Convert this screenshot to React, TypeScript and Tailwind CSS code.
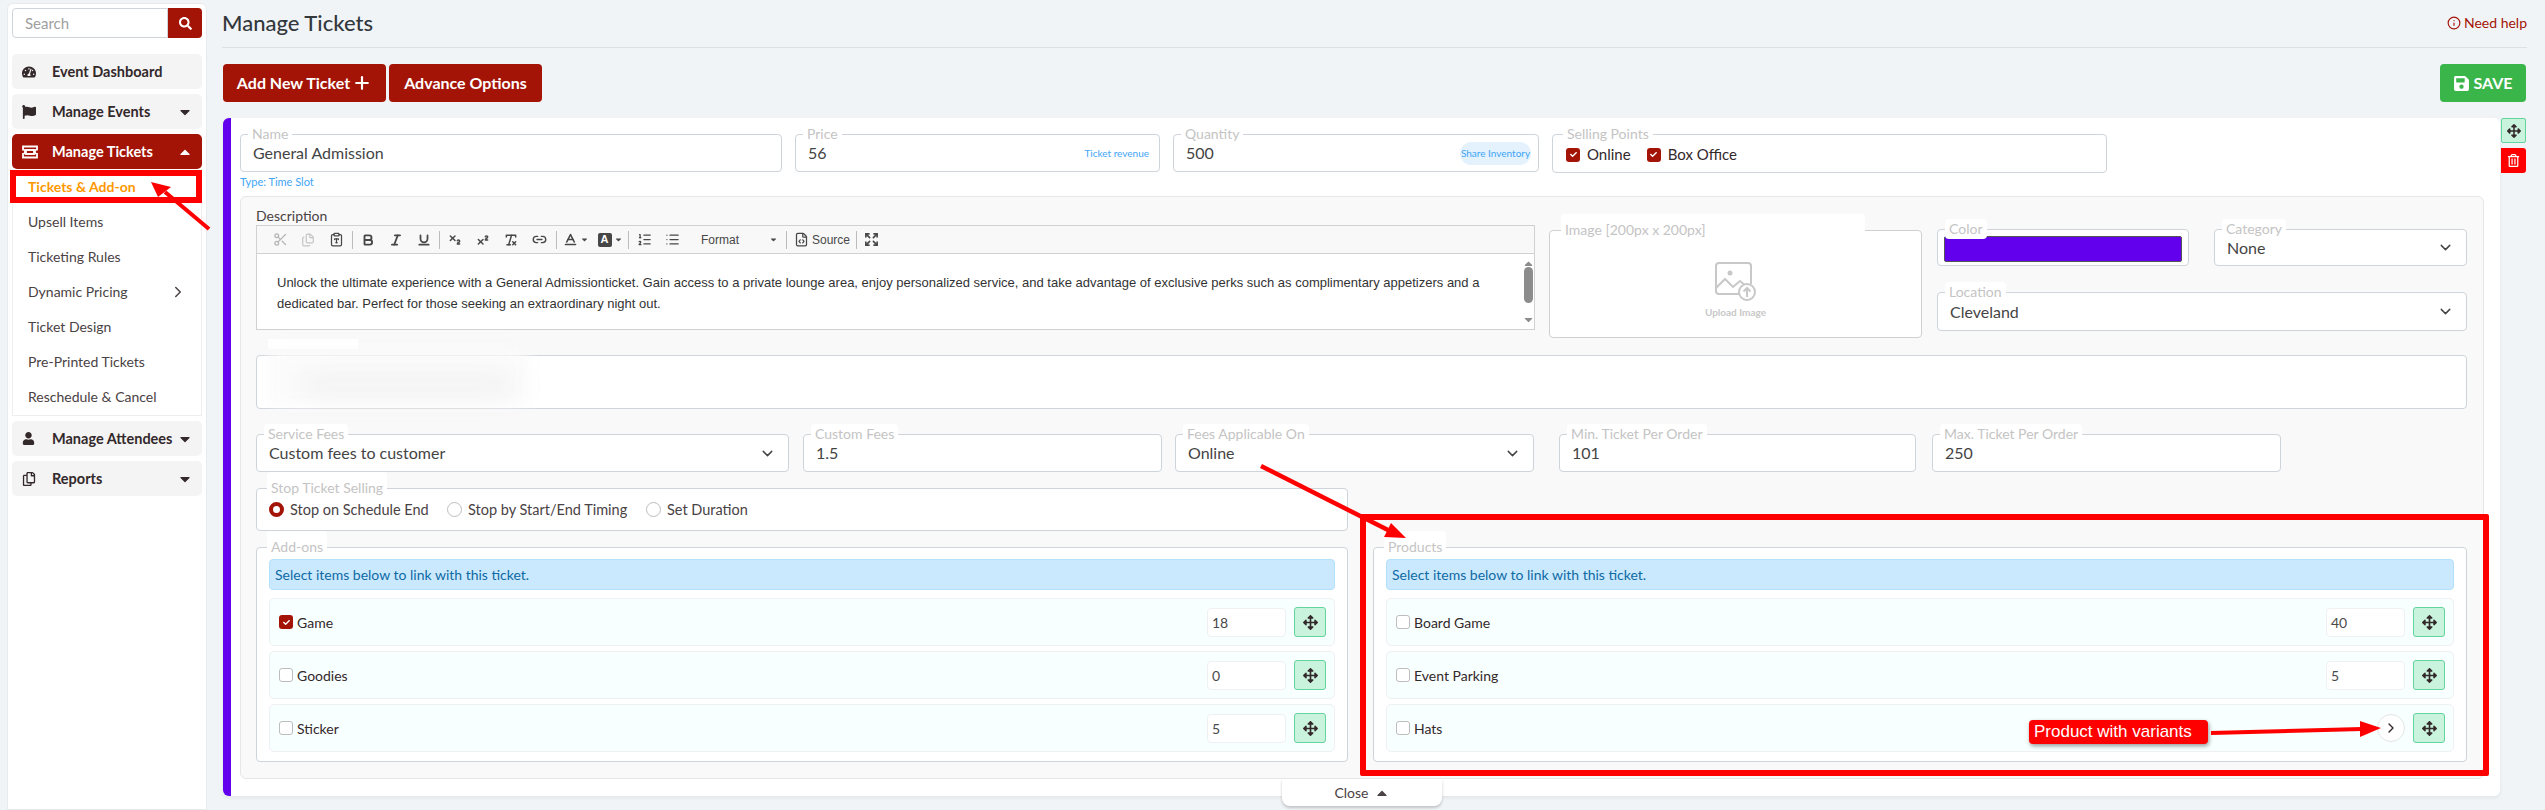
import type { ReactNode } from "react";
import {
  FaArrowsAlt,
  FaCaretDown,
  FaCaretUp,
  FaCheck,
  FaFlag,
  FaRegCopy,
  FaRegTrashAlt,
  FaSave,
  FaSearch,
  FaTachometerAlt,
  FaUser,
} from "react-icons/fa";
import {
  Baseline,
  Bold,
  ChevronDown,
  ChevronRight,
  ClipboardType,
  Expand,
  FileCode,
  Files,
  Info,
  Italic,
  Link2,
  List,
  ListOrdered,
  Plus,
  RemoveFormatting,
  Scissors,
  Subscript,
  Superscript,
  Underline,
} from "lucide-react";

function TicketIcon() {
  return (
    <svg width="16" height="14" viewBox="0 0 16 14" fill="none" stroke="currentColor" strokeWidth="1.8">
      <path d="M1 1.5h14v3.2a2 2 0 0 0 0 4.2v3.6H1V8.9a2 2 0 0 0 0-4.2z" />
      <path d="M4 5h8v4H4z" />
    </svg>
  );
}

function UploadImageIcon() {
  return (
    <svg width="46" height="40" viewBox="0 0 46 40" fill="none" stroke="#c8c8c8" strokeWidth="2">
      <path d="M26 32H6a3 3 0 0 1-3-3V4a3 3 0 0 1 3-3h29a3 3 0 0 1 3 3v18" />
      <path d="M3 26l9-9 8 8 7-6 6 5" />
      <circle cx="17" cy="11" r="2.5" fill="#c8c8c8" stroke="none" />
      <circle cx="34" cy="30" r="8" fill="#fff" />
      <path d="M34 35v-9M30.5 29.5l3.5-3.5 3.5 3.5" />
    </svg>
  );
}

function Field({
  label,
  className,
  labelClass = "",
  children,
}: {
  label: string;
  className: string;
  labelClass?: string;
  children?: ReactNode;
}) {
  return (
    <div className={`relative rounded-[4px] border border-[#ced4da] bg-white ${className}`}>
      <span
        className={`absolute left-[7px] -top-[11px] rounded-[4px] bg-white px-[4px] text-[14px] leading-[20px] text-[#c4c4c4] ${labelClass}`}
      >
        {label}
      </span>
      {children}
    </div>
  );
}

function Check({ checked }: { checked: boolean }) {
  if (checked) {
    return (
      <span className="flex h-[14px] w-[14px] shrink-0 items-center justify-center rounded-[3px] bg-[#a31306] text-white">
        <FaCheck size={7} />
      </span>
    );
  }
  return <span className="h-[14px] w-[14px] shrink-0 rounded-[3px] border border-[#bdbdbd] bg-white" />;
}

function Radio({ on, label, className }: { on?: boolean; label: string; className: string }) {
  return (
    <span className={`flex items-center ${className}`}>
      {on ? (
        <span className="h-[15px] w-[15px] rounded-full border-[4px] border-[#a31306] bg-white" />
      ) : (
        <span className="h-[15px] w-[15px] rounded-full border border-[#bdbdbd] bg-white" />
      )}
      <span className="ml-[6px]">{label}</span>
    </span>
  );
}

function MoveButton({ className = "" }: { className?: string }) {
  return (
    <span
      className={`flex h-[30px] w-[32px] shrink-0 items-center justify-center rounded-[3px] border border-[#63d49c] bg-[#c9f3dd] text-[#33282a] ${className}`}
    >
      <FaArrowsAlt size={15} />
    </span>
  );
}

function ItemRow({ name, qty, checked, variants }: { name: string; qty?: string; checked?: boolean; variants?: boolean }) {
  return (
    <div className="flex h-[48px] items-center rounded-[5px] border border-[#eef0f3] bg-[#f8ffff] pl-[9px] pr-[8px]">
      <Check checked={!!checked} />
      <span className="ml-[4px] flex-1 text-[14px] text-[#33282a]">{name}</span>
      {variants ? (
        <span className="mr-[8px] flex h-[28px] w-[28px] items-center justify-center rounded-full border border-[#e2e5e8] bg-white text-[#33282a]">
          <ChevronRight size={16} />
        </span>
      ) : (
        <span className="mr-[8px] flex h-[29px] w-[79px] items-center rounded-[4px] border border-[#eef0f3] bg-white pl-[4px] text-[14px] text-[#4a4a4a]">
          {qty}
        </span>
      )}
      <MoveButton />
    </div>
  );
}

function LinkGroup({ title, className, children }: { title: string; className: string; children: ReactNode }) {
  return (
    <Field label={title} className={`pl-[12px] pr-[12px] pt-[11px] ${className}`} labelClass="-top-[17px] pt-[6px] left-[10px]">
      <div className="flex h-[31px] items-center rounded-[4px] border border-[#b3e0fb] bg-[#cae9ff] pl-[5px] text-[14px] text-[#0f6aa3]">
        Select items below to link with this ticket.
      </div>
      <div className="mt-[8px] flex flex-col gap-[5px]">{children}</div>
    </Field>
  );
}

function Tool({ children, className = "w-[28px]" }: { children: ReactNode; className?: string }) {
  return <span className={`flex h-full shrink-0 items-center justify-center text-[#474747] ${className}`}>{children}</span>;
}

function Sep({ className = "" }: { className?: string }) {
  return <span className={`h-[18px] w-px shrink-0 bg-[#bcbcbc] ${className}`} />;
}

function EditorToolbar() {
  return (
    <div className="flex h-[28px] items-center border-b border-[#d1d1d1] bg-[#f8f8f8] pl-[9px] font-['Liberation_Sans',sans-serif] text-[12px]">
      <Tool><Scissors size={15} className="text-[#b5b5b5]" /></Tool>
      <Tool><Files size={14} className="text-[#c4c4c4]" /></Tool>
      <Tool><ClipboardType size={15} /></Tool>
      <Sep className="ml-[2px] mr-px" />
      <Tool><Bold size={14} strokeWidth={3.2} /></Tool>
      <Tool><Italic size={14} strokeWidth={3} /></Tool>
      <Tool><Underline size={14} strokeWidth={3} /></Tool>
      <Sep className="mx-px" />
      <Tool><Subscript size={14} strokeWidth={2.5} /></Tool>
      <Tool><Superscript size={14} strokeWidth={2.5} /></Tool>
      <Tool><RemoveFormatting size={14} strokeWidth={2.5} /></Tool>
      <Tool><Link2 size={15} strokeWidth={2.2} /></Tool>
      <Sep className="ml-[3px] mr-[2px]" />
      <Tool className="w-[34px]">
        <Baseline size={15} strokeWidth={2.6} />
        <FaCaretDown size={9} className="ml-[2px]" />
      </Tool>
      <Tool className="w-[34px]">
        <span className="flex h-[14px] w-[14px] items-center justify-center rounded-[2px] bg-[#474747] text-[11px] font-bold leading-none text-white">A</span>
        <FaCaretDown size={9} className="ml-[2px]" />
      </Tool>
      <Sep className="mx-px" />
      <Tool><ListOrdered size={15} /></Tool>
      <Tool><List size={15} /></Tool>
      <span className="flex h-full w-[98px] items-center justify-between pl-[15px] pr-[6px] text-[#474747]">
        Format
        <FaCaretDown size={9} />
      </span>
      <Sep className="mx-[2px]" />
      <span className="flex h-full items-center pl-[5px] text-[#474747]">
        <FileCode size={15} />
        <span className="ml-[3px]">Source</span>
      </span>
      <Sep className="mx-[6px]" />
      <Tool className="w-[16px]"><Expand size={15} strokeWidth={2.6} /></Tool>
    </div>
  );
}

function NavItem({ icon, label, caret, active }: { icon: ReactNode; label: string; caret?: "up" | "down"; active?: boolean }) {
  return (
    <div
      className={`flex h-[35px] items-center rounded-[5px] pl-[10px] pr-[9px] text-[14.5px] font-bold ${
        active ? "bg-[#a31306] text-white" : "bg-[#f4f4f4] text-[#33282a]"
      }`}
    >
      <span className="flex w-[30px] shrink-0 items-center">{icon}</span>
      <span className="flex-1">{label}</span>
      {caret === "down" && <FaCaretDown size={16} />}
      {caret === "up" && <FaCaretUp size={16} />}
    </div>
  );
}

function Sidebar() {
  const subItems = ["Upsell Items", "Ticketing Rules", "Dynamic Pricing", "Ticket Design", "Pre-Printed Tickets", "Reschedule & Cancel"];
  return (
    <aside className="ml-[7px] mt-[3px] h-[807px] w-[200px] shrink-0 rounded-t-[6px] border border-[#e8eaed] bg-white px-[4px] pt-[4px]">
      <div className="flex h-[30px] w-[190px]">
        <div className="flex flex-1 items-center rounded-l-[4px] border border-[#ced4da] bg-white pl-[12px] text-[15px] text-[#a0a0a0]">Search</div>
        <div className="flex w-[34px] items-center justify-center rounded-r-[4px] bg-[#a31306] text-white">
          <FaSearch size={13} />
        </div>
      </div>
      <div className="mt-[16px] flex flex-col gap-[5px]">
        <NavItem icon={<FaTachometerAlt size={14} />} label="Event Dashboard" />
        <NavItem icon={<FaFlag size={14} />} label="Manage Events" caret="down" />
        <div>
          <NavItem icon={<TicketIcon />} label="Manage Tickets" caret="up" active />
          <div className="h-[247px] border border-t-0 border-[#eeeeee]">
            <div className="flex h-[35px] items-center pl-[15px] text-[14px] font-bold text-[#ff9800]">Tickets &amp; Add-on</div>
            {subItems.map((item) => (
              <div key={item} className="flex h-[35px] items-center justify-between pl-[15px] pr-[14px] text-[14px] text-[#4a4244]">
                {item}
                {item === "Dynamic Pricing" && <ChevronRight size={18} />}
              </div>
            ))}
          </div>
        </div>
        <NavItem icon={<FaUser size={13} />} label="Manage Attendees" caret="down" />
        <NavItem icon={<FaRegCopy size={14} />} label="Reports" caret="down" />
      </div>
    </aside>
  );
}

export default function App() {
  return (
    <div className="relative flex h-[810px] w-[2545px] overflow-hidden bg-[#f1f4f6] font-['Lato',sans-serif] text-[#444]">
      <Sidebar />

      <main className="ml-[15px] w-[2305px] shrink-0">
        <header className="flex h-[48px] items-center justify-between border-b border-[#dde1e5] pb-[2px]">
          <h1 className="text-[22px] font-medium leading-none text-[#33383d]">Manage Tickets</h1>
          <span className="flex items-center text-[14px] text-[#a31306]">
            <Info size={14} className="mr-[3px]" />
            Need help
          </span>
        </header>

        <div className="mt-[16px] flex h-[38px] items-stretch">
          <button className="ml-px flex w-[163px] items-center justify-center rounded-[4px] bg-[#a31306] text-[16px] font-bold text-white">
            Add New Ticket
            <Plus size={20} className="ml-[2px]" strokeWidth={2.6} />
          </button>
          <button className="ml-[3px] w-[153px] rounded-[4px] bg-[#a31306] text-[16px] font-bold text-white">Advance Options</button>
          <button className="ml-auto mr-px flex w-[86px] items-center justify-center rounded-[4px] bg-[#39b54a] text-[16px] font-bold text-white">
            <FaSave size={17} className="mr-[3px]" />
            SAVE
          </button>
        </div>

        <div className="mt-[16px] flex items-start">
          <section className="ml-px h-[678px] w-[2277px] shrink-0 rounded-[6px] border-l-[8px] border-[#6200ee] bg-white pl-[9px] pr-[16px] pt-[16px] shadow-[0_2px_4px_rgba(0,0,0,0.06)]">
            <div className="flex items-start gap-[13px]">
              <Field label="Name" className="flex h-[38px] w-[542px] items-center pl-[12px] text-[16px]">General Admission</Field>
              <Field label="Price" className="flex h-[38px] w-[365px] items-center justify-between pl-[12px] pr-[10px] text-[16px]">
                56
                <span className="text-[10px] text-[#42a5f5]">Ticket revenue</span>
              </Field>
              <Field label="Quantity" className="flex h-[38px] w-[366px] items-center justify-between pl-[12px] pr-[7px] text-[16px]">
                500
                <span className="flex h-[23px] w-[71px] items-center justify-center rounded-full bg-[#e3f2fd] text-[10px] text-[#42a5f5]">Share Inventory</span>
              </Field>
              <Field
                label="Selling Points"
                className="flex h-[39px] w-[555px] items-center pl-[13px] pt-[2px] text-[15px] text-[#33282a]"
                labelClass="-top-[17px] left-[10px] pt-[6px]"
              >
                <Check checked />
                <span className="ml-[7px]">Online</span>
                <span className="ml-[16px]"><Check checked /></span>
                <span className="ml-[7px]">Box Office</span>
              </Field>
            </div>
            <div className="mt-[1px] h-[22px] text-[11px] leading-[16px] text-[#42a5f5]">Type: Time Slot</div>

            <div className="h-[583px] rounded-[6px] border border-[#e4e6e9] bg-[#f9f9f9] pl-[15px] pr-[16px] pt-[9px]">
              <div className="flex h-[132px] items-start">
                <div className="w-[1279px] shrink-0">
                  <div className="h-[19px] text-[14px] leading-[19px] text-[#4a4244]">Description</div>
                  <div className="h-[105px] border border-[#d1d1d1] bg-white">
                    <EditorToolbar />
                    <div className="flex h-[75px]">
                      <div className="flex-1 pl-[20px] pr-[40px] pt-[18px] font-['Liberation_Sans',sans-serif] text-[13px] leading-[21px] text-[#333]">
                        Unlock the ultimate experience with a General Admissionticket. Gain access to a private lounge area, enjoy personalized service, and take advantage of exclusive perks such as complimentary appetizers and a dedicated bar. Perfect for those seeking an extraordinary night out.
                      </div>
                      <div className="flex w-[12px] flex-col items-center justify-between py-[3px] text-[#8c8c8c]">
                        <FaCaretUp size={13} />
                        <span className="-mt-[14px] h-[36px] w-[9px] rounded-full bg-[#8c8c8c]" />
                        <FaCaretDown size={13} />
                      </div>
                    </div>
                  </div>
                </div>

                <Field
                  label="Image [200px x 200px]"
                  className="ml-[14px] mt-[24px] flex h-[108px] w-[373px] shrink-0 flex-col items-center justify-center border-[#d0d0d0] pt-[14px]"
                  labelClass="-top-[17px] left-[11px] w-[304px] pt-[6px]"
                >
                  <UploadImageIcon />
                  <span className="mt-[3px] text-[10px] font-bold text-[#c8c8c8]">Upload Image</span>
                </Field>

                <div className="ml-[15px] mt-[23px] flex w-[530px] shrink-0 flex-col gap-[26px]">
                  <div className="flex gap-[25px]">
                    <Field label="Color" className="h-[37px] w-[252px] bg-[#f7f7f7] px-[6px] pt-[6px]" labelClass="-top-[10px] leading-[16px]">
                      <div className="h-[26px] rounded-[2px] border border-[#555] bg-[#6200ee]" />
                    </Field>
                    <Field label="Category" className="flex h-[37px] w-[253px] items-center justify-between pl-[12px] pr-[12px] text-[16px]">
                      None
                      <ChevronDown size={17} />
                    </Field>
                  </div>
                  <Field label="Location" className="flex h-[39px] w-[530px] items-center justify-between pl-[12px] pr-[12px] text-[16px]">
                    Cleveland
                    <ChevronDown size={17} />
                  </Field>
                </div>
              </div>

              <div className="relative mt-[17px] h-[54px] w-[2211px] overflow-visible rounded-[4px] border border-[#ced4da] bg-white">
                <div className="absolute -top-[17px] left-[11px] h-[10px] w-[90px] bg-white" />
                <div className="absolute -top-[5px] left-[11px] h-[53px] w-[260px] bg-[#fbfbfb] blur-sm" />
                <div className="absolute left-[45px] top-[22px] h-[13px] w-[210px] rounded-full bg-[#eeeded] blur-md" />
              </div>

              <div className="mt-[25px] flex h-[38px] items-stretch text-[16px]">
                <Field label="Service Fees" className="flex w-[533px] items-center justify-between pl-[12px] pr-[12px]">
                  Custom fees to customer
                  <ChevronDown size={17} />
                </Field>
                <Field label="Custom Fees" className="ml-[14px] flex w-[359px] items-center pl-[12px]">1.5</Field>
                <Field label="Fees Applicable On" className="ml-[13px] flex w-[359px] items-center justify-between pl-[12px] pr-[12px]">
                  Online
                  <ChevronDown size={17} />
                </Field>
                <Field label="Min. Ticket Per Order" className="ml-[25px] flex w-[357px] items-center pl-[12px]">101</Field>
                <Field label="Max. Ticket Per Order" className="ml-[16px] flex w-[349px] items-center pl-[12px]">250</Field>
              </div>

              <Field
                label="Stop Ticket Selling"
                className="mt-[16px] flex h-[43px] w-[1092px] items-center text-[14.5px] text-[#4a4244]"
                labelClass="-top-[17px] left-[10px] pt-[6px]"
              >
                <Radio on label="Stop on Schedule End" className="ml-[12px] w-[178px]" />
                <Radio label="Stop by Start/End Timing" className="w-[199px]" />
                <Radio label="Set Duration" className="" />
              </Field>

              <div className="mt-[16px] flex gap-[25px]">
                <LinkGroup title="Add-ons" className="h-[215px] w-[1092px]">
                  <ItemRow name="Game" qty="18" checked />
                  <ItemRow name="Goodies" qty="0" />
                  <ItemRow name="Sticker" qty="5" />
                </LinkGroup>
                <LinkGroup title="Products" className="h-[215px] w-[1094px]">
                  <ItemRow name="Board Game" qty="40" />
                  <ItemRow name="Event Parking" qty="5" />
                  <ItemRow name="Hats" variants />
                </LinkGroup>
              </div>
            </div>
          </section>

          <div className="ml-px flex w-[25px] flex-col gap-[5px]">
            <span className="flex h-[25px] items-center justify-center rounded-[2px] border border-[#63d49c] bg-[#c9f3dd] text-[#33282a]">
              <FaArrowsAlt size={14} />
            </span>
            <span className="flex h-[25px] items-center justify-center rounded-r-[3px] bg-[#ff0000] text-white">
              <FaRegTrashAlt size={13} />
            </span>
          </div>
        </div>
      </main>

      {/* collapse tab over the card's lower edge */}
      <div className="absolute left-[1282px] top-[779px] flex h-[27px] w-[160px] items-center justify-center rounded-b-[8px] bg-white text-[14px] text-[#4a4244] shadow-[0_2px_3px_rgba(0,0,0,0.2)]">
        Close
        <FaCaretUp size={16} className="ml-[5px]" />
      </div>

      {/* red annotations painted on the screenshot */}
      <div className="absolute left-[10px] top-[170px] h-[33px] w-[192px] border-[6px] border-[#ff0000]" />
      <div className="absolute left-[1360px] top-[514px] h-[262px] w-[1129px] rounded-[2px] border-[6px] border-[#ff0000]" />
      <div className="absolute left-[2029px] top-[720px] flex h-[24px] w-[179px] items-center rounded-[4px] bg-[#ff0000] pl-[5px] font-['Liberation_Sans',sans-serif] text-[17px] text-white shadow-[1px_2px_4px_rgba(0,0,0,0.4)]">
        Product with variants
      </div>
      <svg className="pointer-events-none absolute left-0 top-0" width="2545" height="810" fill="#ff0000" stroke="none">
        <path d="M209 229L165 192" stroke="#ff0000" strokeWidth="4" />
        <path d="M151 182L158 197L171 187Z" />
        <path d="M1261 466L1388 530" stroke="#ff0000" strokeWidth="4.5" />
        <path d="M1406 538L1384 537L1391 523Z" />
        <path d="M2211 733L2362 729" stroke="#ff0000" strokeWidth="4" />
        <path d="M2381 728L2360 721L2360 737Z" />
      </svg>
    </div>
  );
}
